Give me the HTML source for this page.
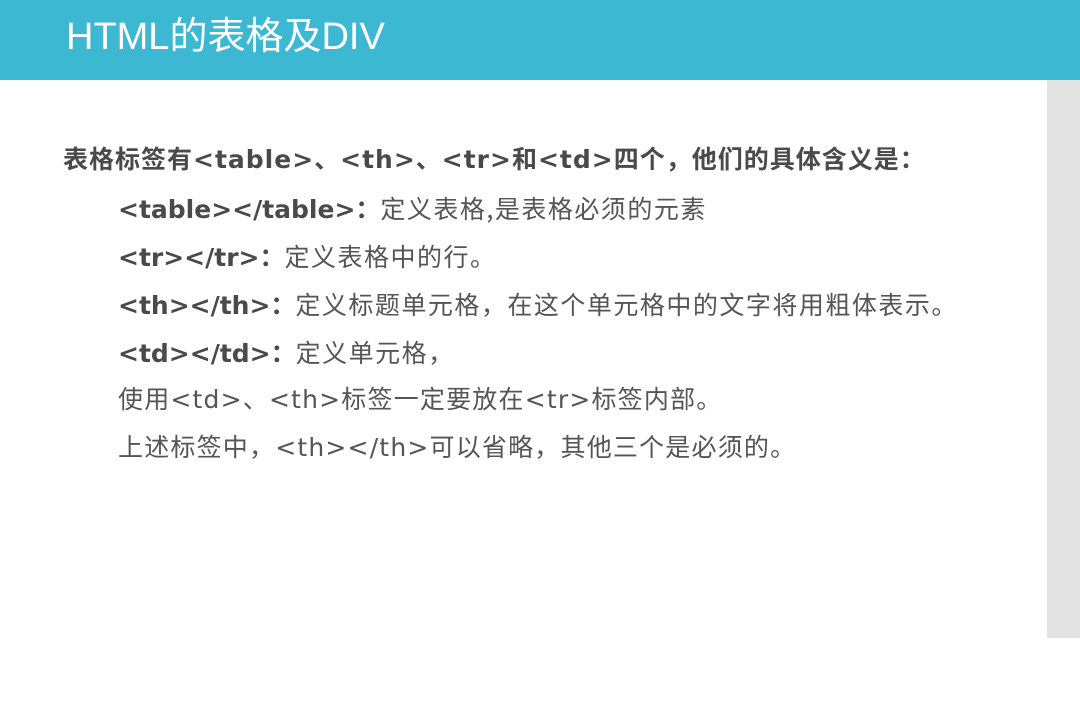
<!DOCTYPE html>
<html><head><meta charset="utf-8"><style>
html,body{margin:0;padding:0;width:1080px;height:720px;background:#fff;overflow:hidden;position:relative;font-family:"DejaVu Sans","Noto Sans CJK SC",sans-serif;text-spacing-trim:space-all;}
.hd{position:absolute;left:0;top:0;width:1080px;height:80px;background:#3db8d3;}
.hd span{position:absolute;left:66px;top:13px;font-size:38px;color:#fff;line-height:48px;font-family:"Liberation Sans","Noto Sans CJK SC",sans-serif;}
.side{position:absolute;left:1047px;top:80px;width:33px;height:558px;background:#e3e3e3;}
.l{position:absolute;font-size:25px;color:#555;line-height:34px;white-space:nowrap;letter-spacing:1.2px;}
.c{font-family:"Noto Sans CJK SC",sans-serif;font-size:25px;letter-spacing:1.5px;}
b{font-weight:bold;color:#4a4a4a;letter-spacing:0;}
</style></head><body>
<div class="hd"><span>HTML的表格及DIV</span></div>
<div class="side"></div>
<div class="l" style="left:63px;top:143px;letter-spacing:1px"><b style="letter-spacing:1px">表格标签有&lt;table&gt;、&lt;th&gt;、&lt;tr&gt;和&lt;td&gt;四个，他们的具体含义是：</b></div>
<div class="l" style="left:118px;top:191px"><b>&lt;table&gt;&lt;/table&gt;：</b><span class="c">定义表格,是表格必须的元素</span></div>
<div class="l" style="left:118px;top:239px"><b>&lt;tr&gt;&lt;/tr&gt;：</b><span class="c">定义表格中的行。</span></div>
<div class="l" style="left:118px;top:287px"><b>&lt;th&gt;&lt;/th&gt;：</b><span class="c">定义标题单元格，在这个单元格中的文字将用粗体表示。</span></div>
<div class="l" style="left:118px;top:335px"><b>&lt;td&gt;&lt;/td&gt;：</b><span class="c">定义单元格，</span></div>
<div class="l" style="left:118px;top:383px">使用&lt;td&gt;、&lt;th&gt;标签一定要放在&lt;tr&gt;标签内部。</div>
<div class="l" style="left:118px;top:431px">上述标签中，&lt;th&gt;&lt;/th&gt;可以省略，其他三个是必须的。</div>
</body></html>
